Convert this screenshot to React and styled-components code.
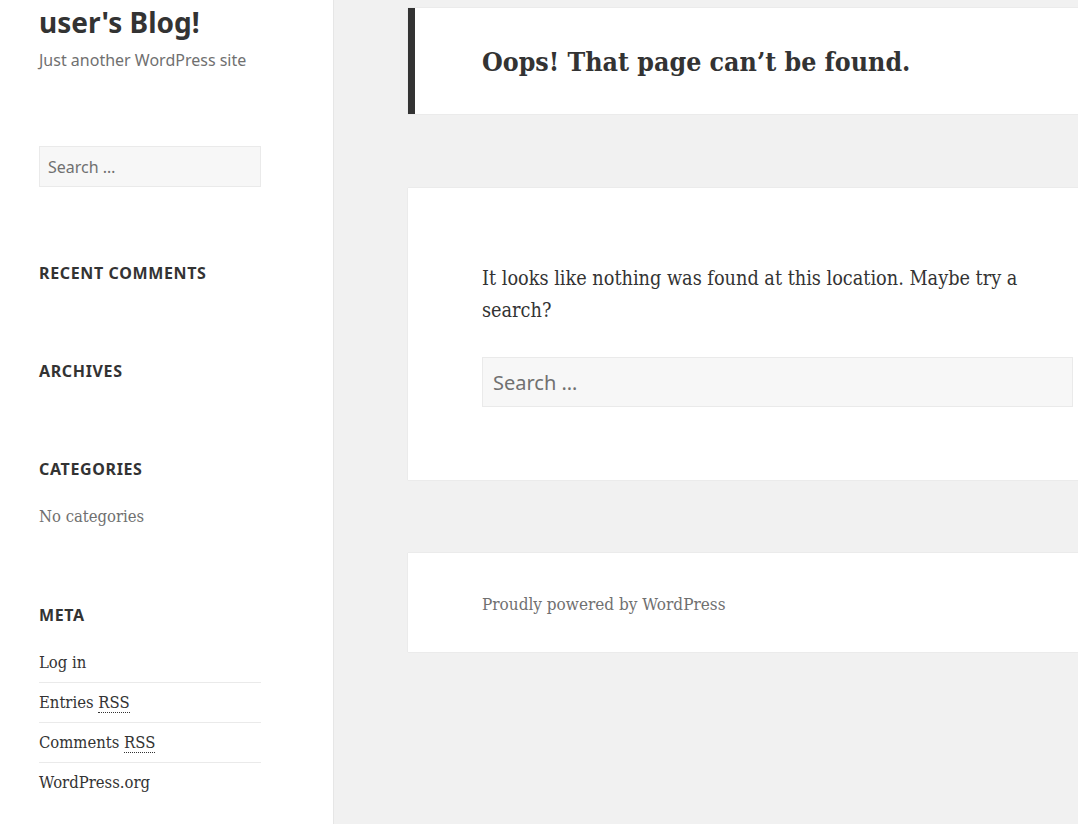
import React from 'react';
import styled, { createGlobalStyle } from 'styled-components';

const sans = `'Noto Sans', 'Open Sans', sans-serif`;
const serif = `'DejaVu Serif', 'Liberation Serif', serif`;

const GlobalStyle = createGlobalStyle`
  html, body {
    margin: 0;
    padding: 0;
    background: #f1f1f1;
    color: #333;
    overflow: hidden;
  }
`;

const Page = styled.div`
  display: flex;
  min-height: 100vh;
  width: 100vw;
  overflow: hidden;
`;

const Sidebar = styled.aside`
  flex: 0 0 334px;
  box-sizing: border-box;
  background: #fff;
  border-right: 1px solid #e6e6e6;
  padding: 4px 0 0 39px;
`;

const SidebarInner = styled.div`
  width: 222px;
`;

const SiteTitle = styled.h1`
  margin: 0;
  font-family: ${sans};
  font-weight: 700;
  font-size: 28px;
  line-height: 36px;
  color: #333;
`;

const SiteDescription = styled.p`
  margin: 8px 0 74px;
  font-family: ${sans};
  font-size: 16px;
  line-height: 24px;
  color: #707070;
`;

const Widget = styled.section`
  margin-bottom: 74px;
`;

const WidgetTitle = styled.h2`
  margin: 0;
  font-family: ${sans};
  font-weight: 700;
  font-size: 16px;
  line-height: 24px;
  letter-spacing: 0.04em;
  text-transform: uppercase;
  color: #333;
`;

const WidgetList = styled.ul`
  list-style: none;
  margin: 23px 0 0;
  padding: 0;
`;

const WidgetItem = styled.li`
  padding-top: 1px;
  font-family: ${serif};
  font-stretch: condensed;
  font-size: 16.5px;
  line-height: 24px;
  color: ${props => (props.muted ? '#707070' : '#333')};

  & + & {
    margin-top: 7px;
    padding-top: 8px;
    border-top: 1px solid #eaeaea;
  }
`;

const Abbr = styled.abbr`
  text-decoration: none;
  border-bottom: 1px dotted #333;
`;

const SearchField = styled.div`
  box-sizing: border-box;
  width: 100%;
  height: ${props => (props.large ? '50px' : '41px')};
  display: flex;
  align-items: center;
  padding: 0 ${props => (props.large ? '10px' : '8px')};
  background: #f7f7f7;
  border: 1px solid #eaeaea;
  font-family: ${sans};
  font-size: ${props => (props.large ? '20px' : '16px')};
  color: #707070;
`;

const Main = styled.main`
  flex: 0 0 739px;
  padding: 8px 0 0 74px;
`;

const Card = styled.div`
  background: #fff;
  box-shadow: 0 0 1px rgba(0, 0, 0, 0.15);
  margin-bottom: ${props => props.gap || 0}px;
`;

const PageHeader = styled(Card)`
  border-left: 7px solid #333;
  padding: 34px 74px 33px 67px;
`;

const PageTitle = styled.h1`
  margin: 0;
  font-family: ${serif};
  font-stretch: condensed;
  font-weight: 700;
  font-size: 26.5px;
  line-height: 39px;
  color: #333;
`;

const Content = styled(Card)`
  padding: 75px 74px 73px;
`;

const BodyText = styled.p`
  margin: 0 0 30px;
  font-family: ${serif};
  font-stretch: condensed;
  font-size: 19.7px;
  line-height: 32px;
  color: #333;
`;

const Footer = styled(Card)`
  padding: 39px 74px 36px;
  font-family: ${serif};
  font-stretch: condensed;
  font-size: 17px;
  line-height: 24px;
  color: #707070;
`;

export default function App() {
  return (
    <Page>
      <GlobalStyle />
      <Sidebar>
        <SidebarInner>
          <SiteTitle>user's Blog!</SiteTitle>
          <SiteDescription>Just another WordPress site</SiteDescription>
          <Widget>
            <SearchField>Search …</SearchField>
          </Widget>
          <Widget>
            <WidgetTitle>Recent Comments</WidgetTitle>
          </Widget>
          <Widget>
            <WidgetTitle>Archives</WidgetTitle>
          </Widget>
          <Widget>
            <WidgetTitle>Categories</WidgetTitle>
            <WidgetList>
              <WidgetItem muted>No categories</WidgetItem>
            </WidgetList>
          </Widget>
          <Widget>
            <WidgetTitle>Meta</WidgetTitle>
            <WidgetList>
              <WidgetItem>Log in</WidgetItem>
              <WidgetItem>
                Entries <Abbr>RSS</Abbr>
              </WidgetItem>
              <WidgetItem>
                Comments <Abbr>RSS</Abbr>
              </WidgetItem>
              <WidgetItem>WordPress.org</WidgetItem>
            </WidgetList>
          </Widget>
        </SidebarInner>
      </Sidebar>
      <Main>
        <PageHeader gap={74}>
          <PageTitle>Oops! That page can’t be found.</PageTitle>
        </PageHeader>
        <Content gap={73}>
          <BodyText>It looks like nothing was found at this location. Maybe try a search?</BodyText>
          <SearchField large>Search …</SearchField>
        </Content>
        <Footer>Proudly powered by WordPress</Footer>
      </Main>
    </Page>
  );
}
